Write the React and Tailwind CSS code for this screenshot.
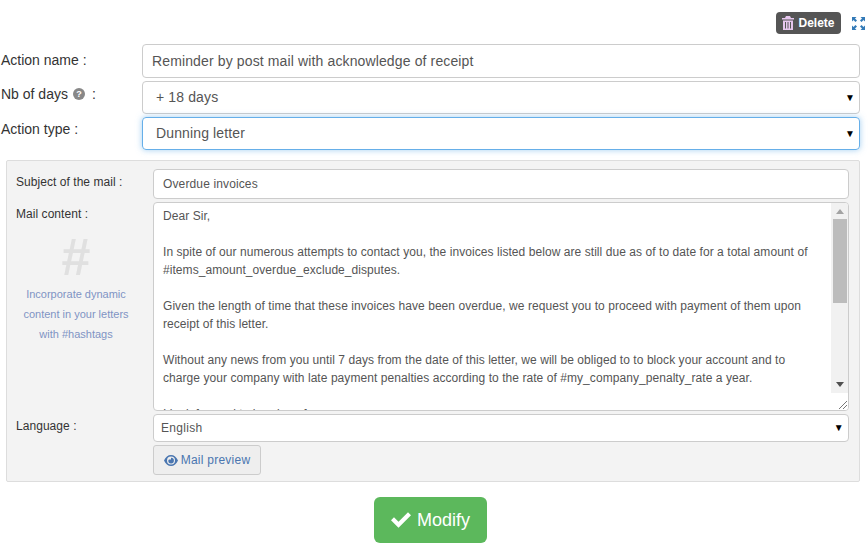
import React from 'react';

const Caret = () => <span className="text-[10px] leading-none text-black">▼</span>;

const FormRow = ({ label, labelClass = 'pt-[6px]', children, className = '' }) => (
  <div className={`flex ${className}`}>
    <div className={`w-[142px] shrink-0 pl-px text-[14px] leading-[20px] text-[#333] ${labelClass}`}>{label}</div>
    <div className="flex-1">{children}</div>
  </div>
);

const SelectBox = ({ value, focus }) => (
  <div className={`flex h-[33px] items-center justify-between rounded-[4px] border pl-[13px] pr-[4px] text-[14px] tracking-[0.13px] text-[#555] ${focus ? 'border-[#66afe9] shadow-[0_0_6px_rgba(102,175,233,0.6)]' : 'border-[#ccc]'}`}>
    <span>{value}</span>
    <Caret />
  </div>
);

const InnerLabel = ({ children }) => <div className="text-[12px] leading-[18px] tracking-[0.05px] text-[#333]">{children}</div>;

const mailLines = [
  'Dear Sir,',
  '',
  'In spite of our numerous attempts to contact you, the invoices listed below are still due as of to date for a total amount of',
  '#items_amount_overdue_exclude_disputes.',
  '',
  'Given the length of time that these invoices have been overdue, we request you to proceed with payment of them upon',
  'receipt of this letter.',
  '',
  'Without any news from you until 7 days from the date of this letter, we will be obliged to to block your account and to',
  'charge your company with late payment penalties according to the rate of #my_company_penalty_rate a year.',
  '',
  'I look forward to hearing of',
];

const ExpandIcon = () => (
  <svg width="13" height="13" viewBox="0 0 13 13" fill="#337ab7">
    <path d="M0 0h4.500L3 1.500 5 3.500 3.500 5 1.500 3 0 4.500zM13 0v4.500L11.500 3 9.500 5 8 3.500 10 1.500 8.500 0zM0 13V8.500L1.500 10 3.500 8 5 9.500 3 11.500 4.500 13zM13 13H8.500L10 11.500 8 9.500 9.500 8 11.500 10 13 8.500z" />
  </svg>
);

const TrashIcon = () => (
  <svg width="12" height="14" viewBox="0 0 12 14" fill="#e6c6ee">
    <path d="M4 0h4l1 2h3v1.500H0V2h3zM1 4.500h10V14H1zM3 6v6.500h1V6zm2.500 0v6.500h1V6zM8 6v6.500h1V6z" fillRule="evenodd" />
  </svg>
);

const EyeIcon = () => (
  <svg width="14" height="11" viewBox="0 0 14 11" fill="#4a76b0">
    <path fillRule="evenodd" d="M7 0c3 0 5.500 2 7 5.500C12.500 9 10 11 7 11S1.500 9 0 5.500C1.500 2 4 0 7 0zm0 1.500A4 4 0 0 0 3 5.500a4 4 0 0 0 8 0 4 4 0 0 0-4-4zM5 4.500h2V2.800A2.800 2.800 0 1 1 4.300 5.500z" />
  </svg>
);

const CheckIcon = () => (
  <svg width="20" height="16" viewBox="0 0 20 16" fill="white">
    <path d="M7.500 15.800 0 8.300l3-3 4.500 4.500L17 .2l3 3z" />
  </svg>
);

const Scrollbar = () => (
  <div className="flex w-[17px] shrink-0 flex-col">
    <div className="flex flex-1 flex-col bg-[#f1f1f1]">
      <div className="flex h-[16px] items-center justify-center">
        <svg width="8" height="5" viewBox="0 0 8 5" fill="#a3a3a3"><path d="M4 0l4 5H0z" /></svg>
      </div>
      <div className="mx-auto h-[84px] w-[14px] bg-[#bcbcbc]" />
      <div className="flex-1" />
      <div className="flex h-[16px] items-start justify-center pt-[5px]">
        <svg width="8" height="5" viewBox="0 0 8 5" fill="#505050"><path d="M4 5l4-5H0z" /></svg>
      </div>
    </div>
    <div className="flex h-[17px] items-end justify-end bg-white">
      <svg width="10" height="10" viewBox="0 0 10 10" stroke="#777" strokeWidth="1">
        <path d="M1 9 9 1M5 9l4-4" />
      </svg>
    </div>
  </div>
);

export default function App() {
  return (
    <div className="h-[543px] w-[868px] overflow-hidden bg-white font-['Liberation_Sans',Arial,sans-serif]">
      <div className="flex h-[44px] items-start justify-end pr-[3px] pt-[12px]">
        <button className="flex h-[22px] w-[65px] items-center justify-center gap-[4px] rounded-[4px] bg-[#555] text-[12px] font-bold text-white">
          <TrashIcon />
          Delete
        </button>
        <div className="ml-[11px] mt-[5px]"><ExpandIcon /></div>
      </div>

      <div className="w-[860px]">
        <FormRow label="Action name :">
          <div className="flex h-[34px] items-center rounded-[4px] border border-[#ccc] pl-[9px] text-[14px] tracking-[0.13px] text-[#555]">
            Reminder by post mail with acknowledge of receipt
          </div>
        </FormRow>
        <FormRow
          labelClass="pt-[3px]"
          label={<span className="flex items-center">Nb of days<span className="ml-[5px] mr-[7px] flex h-[12px] w-[12px] items-center justify-center rounded-full bg-[#888] text-[9px] font-bold text-white">?</span>:</span>}
          className="mt-[3px]"
        >
          <SelectBox value="+ 18 days" />
        </FormRow>
        <FormRow label="Action type :" labelClass="pt-[2px]" className="mt-[3px]">
          <SelectBox value="Dunning letter" focus />
        </FormRow>
      </div>

      <div className="ml-[6px] mt-[10px] h-[322px] w-[854px] rounded-[2px] border border-[#ddd] bg-[#f3f3f3] pl-[9px] pr-[10px] pt-[8px]">
        <div className="flex">
          <div className="w-[137px] shrink-0 pt-[4px]"><InnerLabel>Subject of the mail :</InnerLabel></div>
          <div className="flex h-[30px] flex-1 items-center rounded-[4px] border border-[#ccc] bg-white pl-[9px] text-[12px] tracking-[0.13px] text-[#555]">Overdue invoices</div>
        </div>
        <div className="mt-[3px] flex">
          <div className="w-[137px] shrink-0 pt-[3px]">
            <InnerLabel>Mail content :</InnerLabel>
            <div className="pr-[17px] text-center">
              <div className="mt-[10px] text-[52px] font-bold leading-[48px] text-[#e0e0e0]">#</div>
              <div className="mt-[3px] text-[11px] leading-[20px] text-[#7f93c4]">
                Incorporate dynamic<br />content in your letters<br />with #hashtags
              </div>
            </div>
          </div>
          <div className="flex h-[209px] flex-1 overflow-hidden rounded-[4px] border border-[#ccc] bg-white">
            <div className="flex-1 overflow-hidden pl-[9px] pt-[4px] text-[12px] leading-[18px] tracking-[0.06px] text-[#555]">
              {mailLines.map((line, i) => (
                <div key={i} className="h-[18px] whitespace-nowrap">{line}</div>
              ))}
            </div>
            <Scrollbar />
          </div>
        </div>
        <div className="mt-[3px] flex">
          <div className="w-[137px] shrink-0 pt-[3px]"><InnerLabel>Language :</InnerLabel></div>
          <div className="flex h-[28px] flex-1 items-center justify-between rounded-[4px] border border-[#ccc] bg-white pl-[7px] pr-[4px] text-[12px] tracking-[0.3px] text-[#555]">
            <span>English</span>
            <Caret />
          </div>
        </div>
        <div className="ml-[137px] mt-[3px]">
          <button className="flex h-[30px] w-[108px] items-center justify-center gap-[3px] rounded-[3px] border border-[#ccc] bg-[#eee] text-[12px] tracking-[0.25px] text-[#4a76b0]">
            <EyeIcon />
            Mail preview
          </button>
        </div>
      </div>

      <div className="mt-[15px] flex justify-center pr-[7px]">
        <button className="flex h-[46px] w-[113px] items-center justify-center gap-[6px] rounded-[6px] bg-[#5cb85c] text-[18px] text-white">
          <CheckIcon />
          Modify
        </button>
      </div>
    </div>
  );
}
